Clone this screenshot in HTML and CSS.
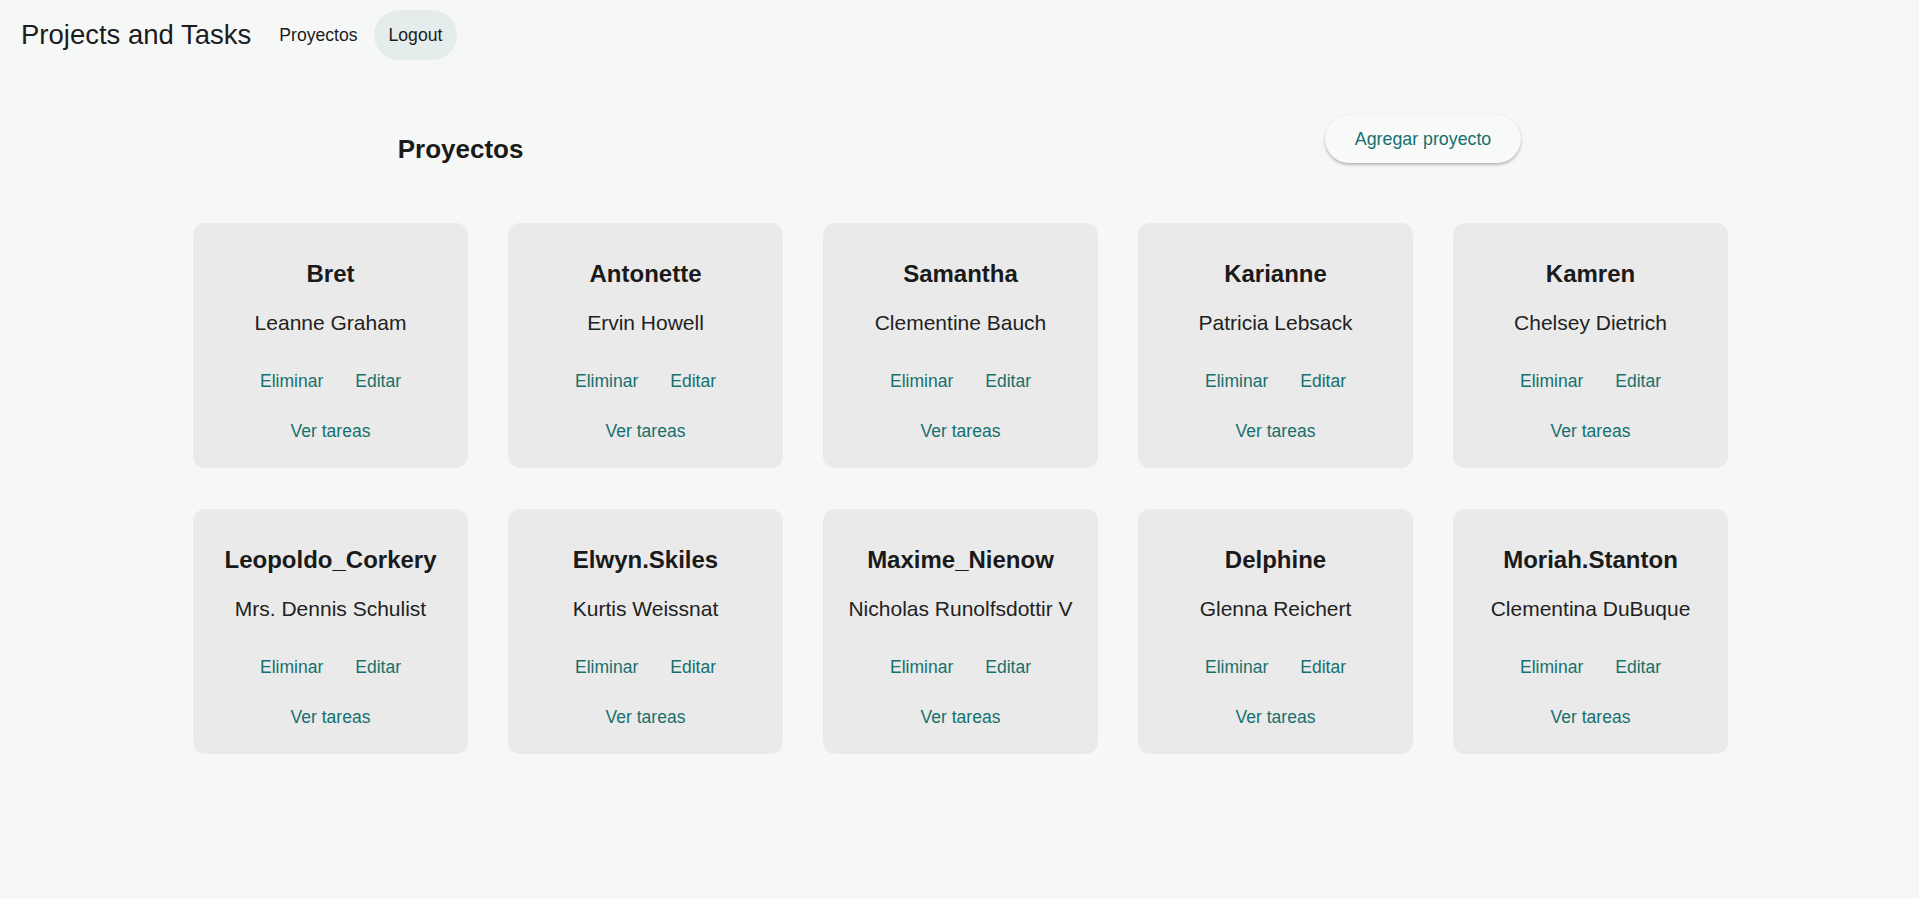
FILE: index.html
```html
<!DOCTYPE html>
<html lang="es">
<head>
<meta charset="utf-8">
<title>Projects and Tasks</title>
<link rel="stylesheet" href="styles.css">
</head>
<body>
<header class="topbar">
  <span class="brand">Projects and Tasks</span>
  <nav class="nav">
    <a class="nav-link" href="#">Proyectos</a>
    <a class="nav-link nav-link-active" href="#">Logout</a>
  </nav>
</header>
<main class="page">
  <div class="page-head">
    <h2 class="page-title">Proyectos</h2>
    <button class="add-btn" type="button">Agregar proyecto</button>
  </div>
  <div class="grid">
    <div class="card"><h3 class="card-title">Bret</h3><p class="card-name">Leanne Graham</p><div class="card-actions"><a href="#" class="card-link">Eliminar</a><a href="#" class="card-link">Editar</a></div><a href="#" class="card-link card-tasks">Ver tareas</a></div>
    <div class="card"><h3 class="card-title">Antonette</h3><p class="card-name">Ervin Howell</p><div class="card-actions"><a href="#" class="card-link">Eliminar</a><a href="#" class="card-link">Editar</a></div><a href="#" class="card-link card-tasks">Ver tareas</a></div>
    <div class="card"><h3 class="card-title">Samantha</h3><p class="card-name">Clementine Bauch</p><div class="card-actions"><a href="#" class="card-link">Eliminar</a><a href="#" class="card-link">Editar</a></div><a href="#" class="card-link card-tasks">Ver tareas</a></div>
    <div class="card"><h3 class="card-title">Karianne</h3><p class="card-name">Patricia Lebsack</p><div class="card-actions"><a href="#" class="card-link">Eliminar</a><a href="#" class="card-link">Editar</a></div><a href="#" class="card-link card-tasks">Ver tareas</a></div>
    <div class="card"><h3 class="card-title">Kamren</h3><p class="card-name">Chelsey Dietrich</p><div class="card-actions"><a href="#" class="card-link">Eliminar</a><a href="#" class="card-link">Editar</a></div><a href="#" class="card-link card-tasks">Ver tareas</a></div>
    <div class="card"><h3 class="card-title">Leopoldo_Corkery</h3><p class="card-name">Mrs. Dennis Schulist</p><div class="card-actions"><a href="#" class="card-link">Eliminar</a><a href="#" class="card-link">Editar</a></div><a href="#" class="card-link card-tasks">Ver tareas</a></div>
    <div class="card"><h3 class="card-title">Elwyn.Skiles</h3><p class="card-name">Kurtis Weissnat</p><div class="card-actions"><a href="#" class="card-link">Eliminar</a><a href="#" class="card-link">Editar</a></div><a href="#" class="card-link card-tasks">Ver tareas</a></div>
    <div class="card"><h3 class="card-title">Maxime_Nienow</h3><p class="card-name">Nicholas Runolfsdottir V</p><div class="card-actions"><a href="#" class="card-link">Eliminar</a><a href="#" class="card-link">Editar</a></div><a href="#" class="card-link card-tasks">Ver tareas</a></div>
    <div class="card"><h3 class="card-title">Delphine</h3><p class="card-name">Glenna Reichert</p><div class="card-actions"><a href="#" class="card-link">Eliminar</a><a href="#" class="card-link">Editar</a></div><a href="#" class="card-link card-tasks">Ver tareas</a></div>
    <div class="card"><h3 class="card-title">Moriah.Stanton</h3><p class="card-name">Clementina DuBuque</p><div class="card-actions"><a href="#" class="card-link">Eliminar</a><a href="#" class="card-link">Editar</a></div><a href="#" class="card-link card-tasks">Ver tareas</a></div>
  </div>
</main>
</body>
</html>
```
FILE: styles.css
```css
* { box-sizing: border-box; }
html, body {
  margin: 0;
  padding: 0;
  background: #f6f8f7;
  font-family: "Liberation Sans", Arial, sans-serif;
  color: #1c1c1c;
}
.topbar {
  display: flex;
  align-items: center;
  height: 70px;
  padding: 10px 0 10px 21px;
}
.brand {
  font-size: 27.5px;
  color: #1c1c1c;
  margin-right: 13px;
}
.nav {
  display: flex;
  align-items: center;
  gap: 1px;
}
.nav-link {
  display: flex;
  align-items: center;
  height: 50px;
  padding: 0 15px;
  border-radius: 25px;
  font-size: 17.6px;
  color: #1c1c1c;
  text-decoration: none;
}
.nav-link-active {
  background: #e5edec;
}
.page-head {
  display: flex;
  justify-content: space-around;
  align-items: flex-start;
  margin-top: 45px;
}
.page-title {
  margin: 19px 0 0;
  font-size: 26px;
  font-weight: bold;
  color: #1a1a1a;
}
.add-btn {
  height: 48px;
  padding: 0 30px;
  margin-left: 6px;
  border: none;
  border-radius: 24px;
  background: #f8faf9;
  color: #16706d;
  font-family: "Liberation Sans", Arial, sans-serif;
  font-size: 17.8px;
  box-shadow: 0 2px 3px rgba(0,0,0,0.25), 0 0 1px rgba(0,0,0,0.08);
  cursor: pointer;
}
.grid {
  display: grid;
  grid-template-columns: repeat(5, 275px);
  gap: 41px 40px;
  justify-content: center;
  margin-top: 58px;
  padding-left: 2px;
}
.card {
  height: 245px;
  background: #eaeaea;
  border-radius: 12px;
  display: flex;
  flex-direction: column;
  align-items: center;
  padding-top: 37px;
}
.card-title {
  margin: 0;
  font-size: 24px;
  font-weight: bold;
  color: #1a1a1a;
}
.card-name {
  margin: 23px 0 0;
  font-size: 21px;
  color: #222;
}
.card-actions {
  display: flex;
  gap: 32px;
  margin-top: 36px;
}
.card-link {
  font-size: 17.5px;
  color: #16706d;
  text-decoration: none;
}
.card-tasks {
  margin-top: 29px;
}
```
